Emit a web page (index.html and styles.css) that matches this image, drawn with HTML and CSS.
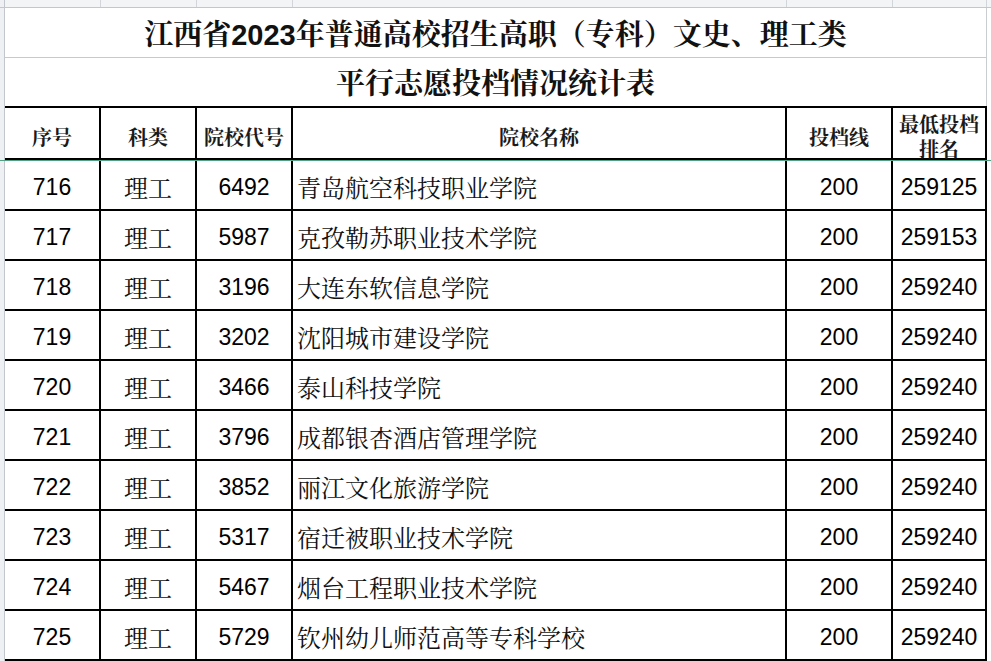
FILE: index.html
```html
<!DOCTYPE html>
<html lang="zh-CN">
<head>
<meta charset="utf-8">
<title>江西省2023年普通高校招生高职（专科）文史、理工类平行志愿投档情况统计表</title>
<link rel="stylesheet" href="styles.css">
</head>
<body>
<div class="sheet">
  <div class="row colhead">
    <div class="strip"></div>
    <div class="ch c1"></div><div class="ch c2"></div><div class="ch c3"></div>
    <div class="ch c4"></div><div class="ch c5"></div><div class="ch c6"></div>
  </div>
  <div class="row title t1">
    <div class="strip"></div>
    <div class="tcell">江西省<span class="tnum">2023</span>年普通高校招生高职（专科）文史、理工类</div>
  </div>
  <div class="row title t2">
    <div class="strip"></div>
    <div class="tcell">平行志愿投档情况统计表</div>
  </div>
  <div class="row hdr">
    <div class="strip"></div>
    <div class="hc c1">序号</div>
    <div class="hc c2">科类</div>
    <div class="hc c3">院校代号</div>
    <div class="hc c4">院校名称</div>
    <div class="hc c5">投档线</div>
    <div class="hc c6 two"><span class="ln">最低投档</span><span class="ln">排名</span></div>
  </div>
  <div class="green"></div>

  <div class="row data"><div class="strip"></div><div class="dc c1 num">716</div><div class="dc c2 cjk">理工</div><div class="dc c3 num">6492</div><div class="dc c4 cjk name">青岛航空科技职业学院</div><div class="dc c5 num">200</div><div class="dc c6 num">259125</div></div>
  <div class="row data"><div class="strip"></div><div class="dc c1 num">717</div><div class="dc c2 cjk">理工</div><div class="dc c3 num">5987</div><div class="dc c4 cjk name">克孜勒苏职业技术学院</div><div class="dc c5 num">200</div><div class="dc c6 num">259153</div></div>
  <div class="row data"><div class="strip"></div><div class="dc c1 num">718</div><div class="dc c2 cjk">理工</div><div class="dc c3 num">3196</div><div class="dc c4 cjk name">大连东软信息学院</div><div class="dc c5 num">200</div><div class="dc c6 num">259240</div></div>
  <div class="row data"><div class="strip"></div><div class="dc c1 num">719</div><div class="dc c2 cjk">理工</div><div class="dc c3 num">3202</div><div class="dc c4 cjk name">沈阳城市建设学院</div><div class="dc c5 num">200</div><div class="dc c6 num">259240</div></div>
  <div class="row data"><div class="strip"></div><div class="dc c1 num">720</div><div class="dc c2 cjk">理工</div><div class="dc c3 num">3466</div><div class="dc c4 cjk name">泰山科技学院</div><div class="dc c5 num">200</div><div class="dc c6 num">259240</div></div>
  <div class="row data"><div class="strip"></div><div class="dc c1 num">721</div><div class="dc c2 cjk">理工</div><div class="dc c3 num">3796</div><div class="dc c4 cjk name">成都银杏酒店管理学院</div><div class="dc c5 num">200</div><div class="dc c6 num">259240</div></div>
  <div class="row data"><div class="strip"></div><div class="dc c1 num">722</div><div class="dc c2 cjk">理工</div><div class="dc c3 num">3852</div><div class="dc c4 cjk name">丽江文化旅游学院</div><div class="dc c5 num">200</div><div class="dc c6 num">259240</div></div>
  <div class="row data"><div class="strip"></div><div class="dc c1 num">723</div><div class="dc c2 cjk">理工</div><div class="dc c3 num">5317</div><div class="dc c4 cjk name">宿迁被职业技术学院</div><div class="dc c5 num">200</div><div class="dc c6 num">259240</div></div>
  <div class="row data"><div class="strip"></div><div class="dc c1 num">724</div><div class="dc c2 cjk">理工</div><div class="dc c3 num">5467</div><div class="dc c4 cjk name">烟台工程职业技术学院</div><div class="dc c5 num">200</div><div class="dc c6 num">259240</div></div>
  <div class="row data"><div class="strip"></div><div class="dc c1 num">725</div><div class="dc c2 cjk">理工</div><div class="dc c3 num">5729</div><div class="dc c4 cjk name">钦州幼儿师范高等专科学校</div><div class="dc c5 num">200</div><div class="dc c6 num">259240</div></div>
</div>
</body>
</html>
```
FILE: styles.css
```css
* { box-sizing: border-box; }
html, body {
  margin: 0;
  padding: 0;
  background: #ffffff;
  overflow: hidden;
}
.sheet {
  width: 991px;
  height: 661px;
  display: flex;
  flex-direction: column;
  color: #000;
  font-family: "Noto Serif CJK SC", "Noto Sans CJK SC", serif;
}
.row {
  display: flex;
  flex: none;
}
.strip {
  flex: none;
  width: 5px;
  background: #eef0f3;
  border-right: 1px solid #c3c6cb;
}
.c1 { width: 96px; }
.c2 { width: 96px; }
.c3 { width: 96px; }
.c4 { width: 494px; }
.c5 { width: 106px; }
.c6 { width: 94px; }

/* column header strip */
.colhead { height: 8px; background: #f3f4f6; border-bottom: 1px solid #c3c6cb; }
.ch { flex: none; height: 100%; border-right: 1px solid #d2d5da; }

/* title rows */
.title .tcell {
  width: 982px;
  border-right: 1px solid #c9ccd1;
  text-align: center;
  font-family: "Liberation Sans", "Noto Serif CJK SC", "Noto Sans CJK SC", sans-serif;
  font-size: 29px;
  font-weight: 700;
  color: #111;
}
.t1 { height: 50px; }
.t1 .tcell { line-height: 50px; border-bottom: 1px solid #c6c9ce; padding-top: 2px; }
.t2 { height: 48px; }
.t2 .tcell { line-height: 48px; padding-top: 2px; }
.tnum { font-family: "Liberation Sans", sans-serif; font-weight: 700; }

/* header */
.hdr { height: 54px; }
.hc {
  flex: none;
  border-top: 2px solid #000;
  border-bottom: 2px solid #000;
  border-right: 2px solid #000;
  display: flex;
  align-items: center;
  justify-content: center;
  text-align: center;
  padding-top: 7px;
  font-family: "Noto Serif CJK SC", "Noto Sans CJK SC", sans-serif;
  font-size: 20px;
  font-weight: 700;
  line-height: 25px;
  color: #1a1a1a;
}
.hc.two {
  flex-direction: column;
  padding-top: 5px;
}
.hc.two .ln {
  display: block;
  height: 25px;
  line-height: 25px;
}

.green {
  flex: none;
  height: 1px;
  width: 991px;
  background: #4fa382;
}

/* data rows */
.data { height: 50px; }
.dc {
  flex: none;
  border-right: 2px solid #000;
  border-bottom: 2px solid #000;
  display: flex;
  align-items: center;
  justify-content: center;
  padding-top: 4px;
  white-space: nowrap;
}
.num {
  font-family: "Liberation Sans", Arial, sans-serif;
  font-size: 23px;
}
.cjk {
  font-family: "Noto Serif CJK SC", "Noto Sans CJK SC", sans-serif;
  font-size: 24px;
  font-weight: 400;
  color: #111;
  padding-top: 3px;
}
.name {
  justify-content: flex-start;
  padding-left: 4px;
}
```
